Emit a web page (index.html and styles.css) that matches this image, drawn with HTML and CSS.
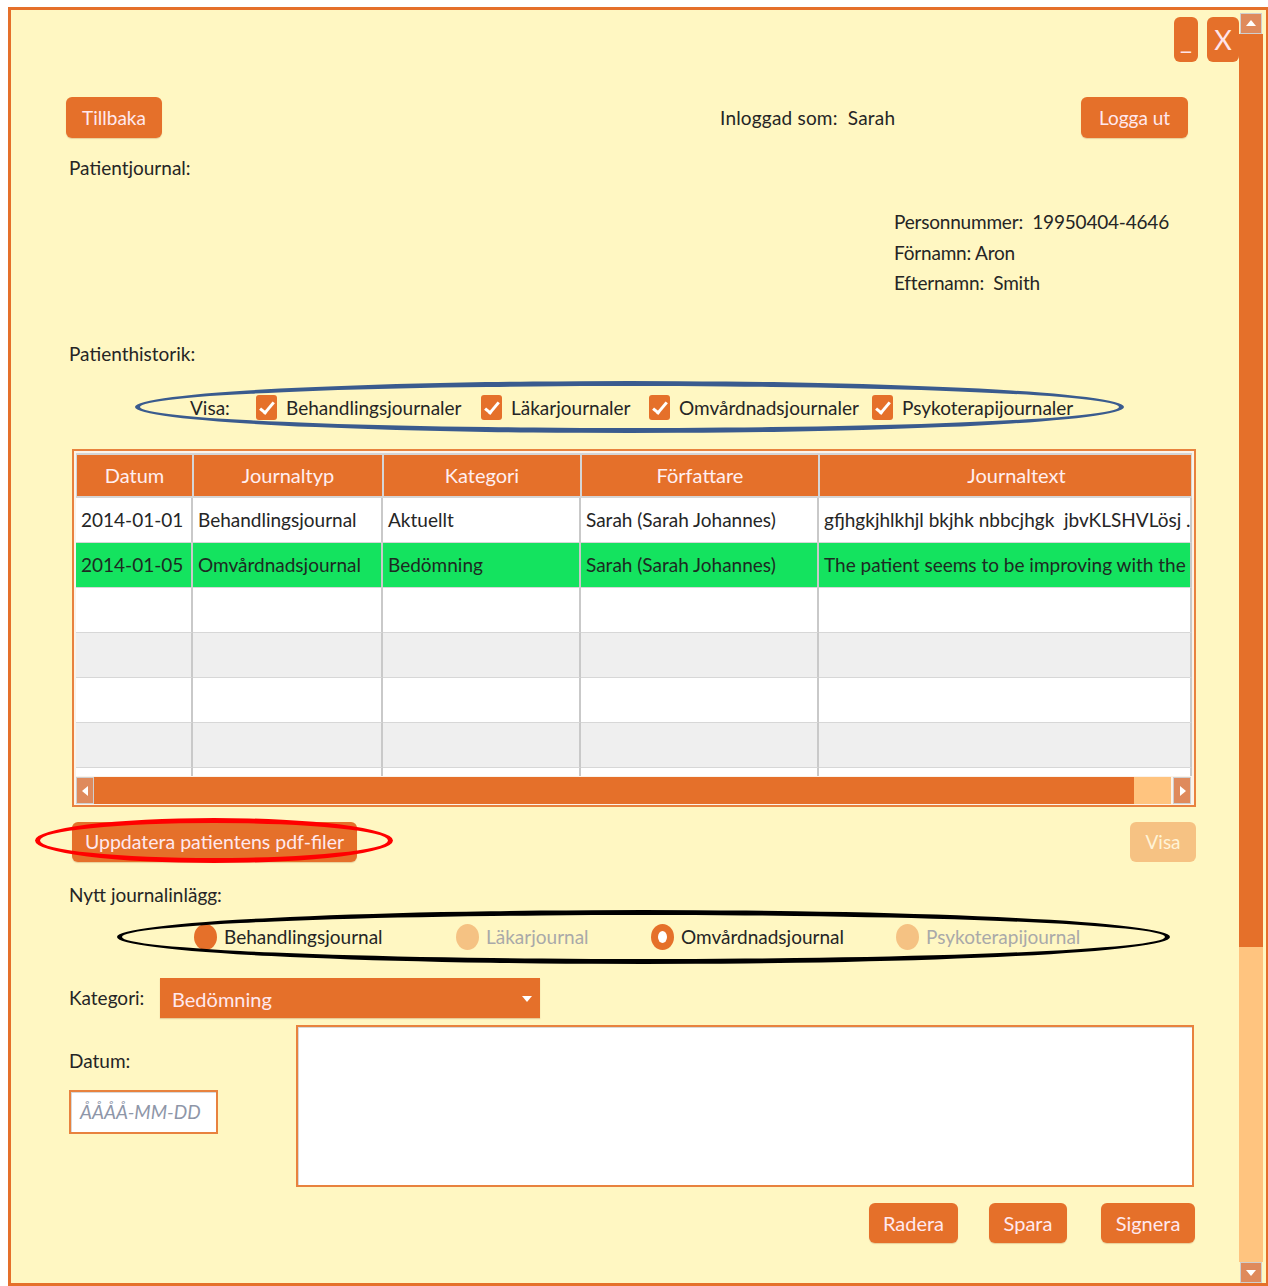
FILE: index.html
```html
<!DOCTYPE html>
<html lang="sv">
<head>
<meta charset="utf-8">
<title>Patientjournal</title>
<link rel="stylesheet" href="styles.css">
</head>
<body>
<div class="window">
  <div class="content">
    <div class="winctl">
      <button class="wbtn">_</button>
      <button class="wbtn close">X</button>
    </div>

    <div class="main">
      <div class="topbar">
        <button class="btn back">Tillbaka</button>
        <span class="login">Inloggad som:&nbsp; Sarah</span>
        <button class="btn logout">Logga ut</button>
      </div>

      <div class="label pj">Patientjournal:</div>

      <div class="patient">
        <div>Personnummer:&nbsp; 19950404-4646</div>
        <div>Förnamn: Aron</div>
        <div>Efternamn:&nbsp; Smith</div>
      </div>

      <div class="label ph">Patienthistorik:</div>

      <div class="filters">
        <span class="visa">Visa:</span>
        <label class="check w1"><span class="box"></span>Behandlingsjournaler</label>
        <label class="check w2"><span class="box"></span>Läkarjournaler</label>
        <label class="check w3"><span class="box"></span>Omvårdnadsjournaler</label>
        <label class="check"><span class="box"></span>Psykoterapijournaler</label>
      </div>

      <div class="table">
        <div class="grid">
          <div class="th">Datum</div>
          <div class="th">Journaltyp</div>
          <div class="th">Kategori</div>
          <div class="th">Författare</div>
          <div class="th wide">Journaltext</div>

          <div class="td">2014-01-01</div>
          <div class="td">Behandlingsjournal</div>
          <div class="td">Aktuellt</div>
          <div class="td">Sarah (Sarah Johannes)</div>
          <div class="td">gfjhgkjhlkhjl bkjhk nbbcjhgk&nbsp; jbvKLSHVLösj .</div>

          <div class="td sel">2014-01-05</div>
          <div class="td sel">Omvårdnadsjournal</div>
          <div class="td sel">Bedömning</div>
          <div class="td sel">Sarah (Sarah Johannes)</div>
          <div class="td sel">The patient seems to be improving with the</div>

          <div class="td"></div><div class="td"></div><div class="td"></div><div class="td"></div><div class="td"></div>
          <div class="td alt"></div><div class="td alt"></div><div class="td alt"></div><div class="td alt"></div><div class="td alt"></div>
          <div class="td"></div><div class="td"></div><div class="td"></div><div class="td"></div><div class="td"></div>
          <div class="td alt"></div><div class="td alt"></div><div class="td alt"></div><div class="td alt"></div><div class="td alt"></div>
          <div class="td stub"></div><div class="td stub"></div><div class="td stub"></div><div class="td stub"></div><div class="td stub"></div>
        </div>
        <div class="hscroll">
          <span class="arrow left"></span>
          <span class="hthumb"></span>
          <span class="htrack"></span>
          <span class="arrow right"></span>
        </div>
      </div>

      <div class="actions">
        <button class="btn pdf">Uppdatera patientens pdf-filer</button>
        <button class="btn disabled">Visa</button>
      </div>

      <div class="label nj">Nytt journalinlägg:</div>

      <div class="radios">
        <label class="radio r1"><span class="dot"></span>Behandlingsjournal</label>
        <label class="radio r2 off"><span class="dot"></span>Läkarjournal</label>
        <label class="radio r3 on"><span class="dot"></span>Omvårdnadsjournal</label>
        <label class="radio off"><span class="dot"></span>Psykoterapijournal</label>
      </div>

      <div class="kat-row">
        <span class="label kat">Kategori:</span>
        <div class="select">Bedömning<span class="caret"></span></div>
      </div>

      <div class="entry">
        <div class="date-col">
          <div class="label">Datum:</div>
          <div class="date-input">ÅÅÅÅ-MM-DD</div>
        </div>
        <div class="textarea"></div>
      </div>

      <div class="buttons">
        <button class="btn radera">Radera</button>
        <button class="btn spara">Spara</button>
        <button class="btn signera">Signera</button>
      </div>
    </div>
  </div>

  <div class="vscroll">
    <span class="varrow up"></span>
    <span class="vthumb"></span>
    <span class="vtrack"></span>
    <span class="varrow down"></span>
  </div>
</div>

<!-- hand-drawn annotation rings -->
<div class="ring ring-blue"></div>
<div class="ring ring-red"></div>
<div class="ring ring-black"></div>
</body>
</html>
```

FILE: styles.css
```css
* { box-sizing: border-box; }

html, body {
  margin: 0;
  padding: 0;
  background: #ffffff;
}

body {
  position: relative;
  width: 1268px;
  height: 1286px;
  overflow: hidden;
  font-family: Lato, "Open Sans", sans-serif;
  color: #252525;
}

.window {
  margin: 7px 0 0 8px;
  width: 1260px;
  height: 1279px;
  border-top: 3px solid #e5702a;
  border-left: 3px solid #e5702a;
  border-right: 2px solid #e5702a;
  border-bottom: 3px solid #e5702a;
  background: #fff7c2;
  display: flex;
  padding-right: 3px;
}

.content {
  flex: 1;
  display: flex;
  flex-direction: column;
}

/* window controls */
.winctl {
  display: flex;
  justify-content: flex-end;
  gap: 9px;
  padding-top: 7px;
  height: 52px;
}

.wbtn {
  width: 24px;
  height: 45px;
  border: none;
  border-radius: 6px;
  background: #e5702a;
  color: #ffe4ea;
  font-family: Lato, sans-serif;
  font-size: 26px;
  line-height: 45px;
  padding: 0;
  text-align: center;
}
.wbtn.close {
  width: 32px;
  font-size: 27px;
}

.main {
  padding: 0 43px 0 58px;
  display: flex;
  flex-direction: column;
}

/* generic orange button */
.btn {
  border: none;
  border-radius: 6px;
  background: #e5702a;
  color: #ffe8ee;
  font-family: Lato, sans-serif;
  font-size: 19px;
  height: 41px;
  padding: 0;
  text-align: center;
  box-shadow: 0 1px 1px rgba(160, 80, 30, 0.25);
}

.topbar {
  display: flex;
  align-items: center;
  margin-top: 35px;
  margin-left: -3px;
  height: 41px;
}
.back { width: 96px; }
.login {
  margin-left: 558px;
  font-size: 19px;
  letter-spacing: 0.2px;
}
.logout {
  width: 107px;
  margin-left: auto;
  margin-right: 8px;
}

.label {
  font-size: 19px;
  line-height: 22px;
  height: 22px;
}
.pj { margin-top: 19px; }

.patient {
  margin-top: 28px;
  margin-left: 825px;
  font-size: 19px;
  line-height: 30.5px;
  letter-spacing: -0.2px;
}

.ph { margin-top: 44px; }

/* filter checkboxes */
.filters {
  display: flex;
  align-items: center;
  height: 26px;
  margin-top: 30px;
  margin-left: 121px;
  font-size: 19px;
}
.visa { width: 66px; }
.check {
  display: flex;
  align-items: center;
  gap: 9px;
}
.check.w1 { width: 225px; }
.check.w2 { width: 168px; }
.check.w3 { width: 223px; }
.box {
  position: relative;
  width: 21px;
  height: 25px;
  border-radius: 3px;
  background: #e5702a;
  flex: none;
}
.box::after {
  content: "";
  position: absolute;
  left: 7px;
  top: 4px;
  width: 5px;
  height: 12px;
  border-right: 3px solid #fff;
  border-bottom: 3px solid #fff;
  transform: rotate(40deg);
}

/* history table */
.table {
  margin-top: 28px;
  margin-left: 3px;
  height: 358px;
  border: 2px solid #e8823e;
  padding: 2px 2px 0 2px;
  background: #fbf3ea;
  display: flex;
  flex-direction: column;
}
.grid {
  display: grid;
  grid-template-columns: 117px 190px 198px 238px 1fr;
  grid-template-rows: 45px 45px 45px 45px 45px 45px 45px 8px;
  background: #ffffff;
  overflow: hidden;
}
.th {
  background: #e5702a;
  color: #ffeef0;
  font-size: 20px;
  text-align: center;
  line-height: 41px;
  border: 2px solid #d5d5d5;
  border-left-width: 1px;
  border-right-width: 1px;
  white-space: nowrap;
  overflow: hidden;
}
.th.wide { padding-left: 22px; }
.td {
  font-size: 19px;
  line-height: 44px;
  padding-left: 5px;
  border-right: 2px solid #c9c9c9;
  border-bottom: 1px solid #d7d7d7;
  white-space: nowrap;
  overflow: hidden;
  background: #ffffff;
}
.td.sel { background: #14e35f; color: #1d2a22; }
.td.alt { background: #efefef; }
.td.stub { border-bottom: none; }

.hscroll {
  display: flex;
  height: 27px;
  margin: 1px 0 0 0;
  padding: 0 1px 0 0;
}
.arrow {
  width: 18px;
  background: #df8a5c;
  border: 1px solid #cfcfcf;
  position: relative;
}
.arrow::after {
  content: "";
  position: absolute;
  top: 8px;
  border-top: 5px solid transparent;
  border-bottom: 5px solid transparent;
}
.arrow.left::after { left: 5px; border-right: 6px solid #ffffff; }
.arrow.right::after { left: 6px; border-left: 6px solid #ffffff; }
.hthumb { width: 1040px; background: #e5702a; }
.htrack { flex: 1; background: #ffc47f; margin-right: 2px; }

/* actions under table */
.actions {
  display: flex;
  justify-content: space-between;
  margin-top: 15px;
  margin-left: 3px;
}
.pdf { width: 285px; height: 40px; font-size: 19.5px; }
.disabled {
  width: 66px;
  height: 40px;
  background: #f6c283;
  color: #fff3d6;
  box-shadow: none;
}

.nj { margin-top: 22px; }

/* radio buttons */
.radios {
  display: flex;
  align-items: center;
  height: 26px;
  margin-top: 18px;
  margin-left: 125px;
  font-size: 19px;
}
.radio {
  display: flex;
  align-items: center;
  gap: 7px;
}
.radio.r1 { width: 262px; }
.radio.r2 { width: 195px; }
.radio.r3 { width: 245px; }
.dot {
  width: 23px;
  height: 26px;
  border-radius: 50%;
  background: #e5702a;
  flex: none;
  position: relative;
}
.radio.off { color: #a9a9a9; }
.radio.off .dot { background: #f5c283; }
.radio.on .dot::after {
  content: "";
  position: absolute;
  left: 7px;
  top: 7px;
  width: 9px;
  height: 12px;
  border-radius: 50%;
  background: #ffffff;
}

/* category select */
.kat-row {
  display: flex;
  align-items: center;
  margin-top: 28px;
  height: 40px;
}
.kat { width: 91px; }
.select {
  position: relative;
  width: 380px;
  height: 40px;
  background: #e5702a;
  color: #ffe8ee;
  font-size: 20px;
  line-height: 42px;
  padding-left: 12px;
  box-shadow: 0 1px 1px rgba(160, 80, 30, 0.25);
}
.caret {
  position: absolute;
  right: 8px;
  top: 18px;
  border-left: 5px solid transparent;
  border-right: 5px solid transparent;
  border-top: 6px solid #ffffff;
}

/* new entry */
.entry {
  display: flex;
  margin-top: 7px;
}
.date-col {
  width: 227px;
  padding-top: 25px;
  display: flex;
  flex-direction: column;
}
.date-input {
  margin-top: 18px;
  width: 149px;
  height: 44px;
  border: 2px solid #e8823e;
  background: #ffffff;
  box-shadow: inset 1px 1px 0 #d8d8d8;
  font-style: italic;
  font-size: 19px;
  color: #8e96a8;
  line-height: 40px;
  padding-left: 9px;
}
.textarea {
  width: 898px;
  height: 162px;
  border: 2px solid #e8823e;
  background: #ffffff;
  box-shadow: inset 1px 1px 0 #d8d8d8;
}

.buttons {
  display: flex;
  justify-content: flex-end;
  margin-top: 16px;
  margin-right: 1px;
}
.buttons .btn { height: 40px; font-size: 20px; }
.radera { width: 89px; }
.spara { width: 78px; margin-left: 31px; }
.signera { width: 94px; margin-left: 34px; }

/* vertical scrollbar */
.vscroll {
  width: 24px;
  display: flex;
  flex-direction: column;
}
.varrow {
  height: 21px;
  margin: 0 1px;
  background: #df8a5c;
  border: 1px solid #cfcfcf;
  position: relative;
}
.varrow.up { margin-top: 3px; }
.varrow::after {
  content: "";
  position: absolute;
  left: 5px;
  border-left: 5px solid transparent;
  border-right: 5px solid transparent;
}
.varrow.up::after { top: 6px; border-bottom: 6px solid #ffffff; }
.varrow.down::after { top: 7px; border-top: 6px solid #ffffff; }
.vthumb { height: 913px; background: #e5702a; }
.vtrack { flex: 1; background: #ffc47f; }

/* annotation rings */
.ring {
  position: absolute;
  border-radius: 50%;
  pointer-events: none;
}
.ring-blue {
  left: 135px;
  top: 381px;
  width: 989px;
  height: 52px;
  border: 5px solid #3a5b8e;
}
.ring-red {
  left: 35px;
  top: 818px;
  width: 358px;
  height: 45px;
  border: 5px solid #ff0000;
}
.ring-black {
  left: 117px;
  top: 910px;
  width: 1053px;
  height: 54px;
  border: 5px solid #000000;
}
```
